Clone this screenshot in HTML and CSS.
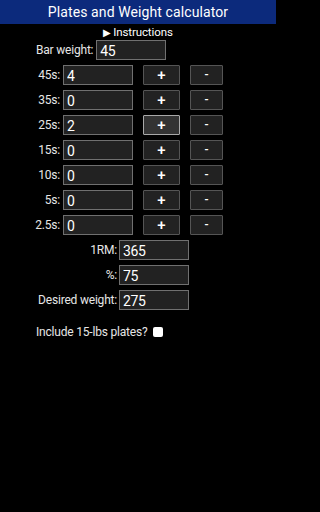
FILE: index.html
```html
<!DOCTYPE html>
<html>
<head>
<meta charset="utf-8">
<link rel="stylesheet" href="styles.css">
</head>
<body>
<header class="topbar">Plates and Weight calculator</header>
<div class="instructions"><span class="tri">&#9654;</span>Instructions</div>
<div class="bar-row">
  <label class="lbl">Bar weight:</label>
  <input class="field" type="text" value="45">
</div>
<div class="plates">
  <div class="plate-row"><span class="plbl">45s:</span><input class="field" type="text" value="4"><button class="btn plus">+</button><button class="btn minus">-</button></div>
  <div class="plate-row"><span class="plbl">35s:</span><input class="field" type="text" value="0"><button class="btn plus">+</button><button class="btn minus">-</button></div>
  <div class="plate-row"><span class="plbl">25s:</span><input class="field" type="text" value="2"><button class="btn plus active">+</button><button class="btn minus">-</button></div>
  <div class="plate-row"><span class="plbl">15s:</span><input class="field" type="text" value="0"><button class="btn plus">+</button><button class="btn minus">-</button></div>
  <div class="plate-row"><span class="plbl">10s:</span><input class="field" type="text" value="0"><button class="btn plus">+</button><button class="btn minus">-</button></div>
  <div class="plate-row"><span class="plbl">5s:</span><input class="field" type="text" value="0"><button class="btn plus">+</button><button class="btn minus">-</button></div>
  <div class="plate-row"><span class="plbl">2.5s:</span><input class="field" type="text" value="0"><button class="btn plus">+</button><button class="btn minus">-</button></div>
</div>
<div class="weights">
  <div class="w-row"><span class="wlbl">1RM:</span><input class="field" type="text" value="365"></div>
  <div class="w-row"><span class="wlbl">%:</span><input class="field" type="text" value="75"></div>
  <div class="w-row"><span class="wlbl">Desired weight:</span><input class="field" type="text" value="275"></div>
</div>
<div class="check-row">
  <span class="clbl">Include 15-lbs plates?</span><input class="chk" type="checkbox">
</div>
</body>
</html>
```

FILE: styles.css
```css
html, body {
  margin: 0;
  padding: 0;
  background: #000;
  color: #e6e6e6;
  font-family: Roboto, "Noto Sans", sans-serif;
}
body {
  width: 276px;
  height: 512px;
}
.topbar {
  height: 24px;
  line-height: 25px;
  background: #0c2a7c;
  color: #fff;
  font-size: 14px;
  letter-spacing: 0.1px;
  text-align: center;
}
.instructions {
  height: 14px;
  line-height: 14px;
  margin-top: 1px;
  font-size: 11.5px;
  letter-spacing: -0.1px;
  text-align: center;
  color: #fff;
}
.tri {
  display: inline-block;
  font-size: 10px;
  margin-right: 2px;
  vertical-align: 0;
}
.bar-row {
  display: flex;
  align-items: center;
  margin-top: 1px;
  margin-left: 36px;
  height: 20px;
}
.lbl, .plbl, .wlbl, .clbl {
  font-size: 12px;
  letter-spacing: -0.2px;
  color: #e6e6e6;
}
.bar-row .lbl {
  margin-right: 3px;
}
.field {
  box-sizing: border-box;
  width: 70px;
  height: 20px;
  margin: 0;
  padding: 1px 0 0 3px;
  background: #222;
  border: 1px solid #707070;
  color: #fff;
  font-family: Roboto, "Noto Sans", sans-serif;
  font-size: 14px;
  letter-spacing: -0.4px;
  outline: none;
}
.plates {
  margin-top: 5px;
  display: flex;
  flex-direction: column;
  gap: 5px;
}
.plate-row {
  display: flex;
  align-items: center;
  height: 20px;
}
.plbl {
  width: 60px;
  text-align: right;
  margin-right: 3px;
}
.btn {
  box-sizing: border-box;
  height: 20px;
  margin: 0;
  padding: 0;
  background: #222;
  border: 1px solid #555;
  border-radius: 1px;
  color: #fff;
  font-family: Roboto, "Noto Sans", sans-serif;
  font-size: 15px;
  font-weight: 500;
  line-height: 18px;
}
.plus {
  width: 37px;
  margin-left: 10px;
}
.minus {
  width: 33px;
  margin-left: 10px;
  font-size: 12px;
}
.btn.active {
  background: #333;
  border-color: #a8a8a8;
}
.weights {
  margin-top: 5px;
  display: flex;
  flex-direction: column;
  gap: 5px;
}
.w-row {
  display: flex;
  align-items: center;
  height: 20px;
}
.wlbl {
  width: 117px;
  text-align: right;
  margin-right: 2px;
}
.check-row {
  display: flex;
  align-items: center;
  margin-top: 14px;
  margin-left: 36px;
  height: 16px;
}
.clbl {
  margin-right: 6px;
}
.chk {
  appearance: none;
  -webkit-appearance: none;
  width: 10px;
  height: 10px;
  margin: 0;
  background: #fff;
  border-radius: 2px;
  border: none;
}
```
